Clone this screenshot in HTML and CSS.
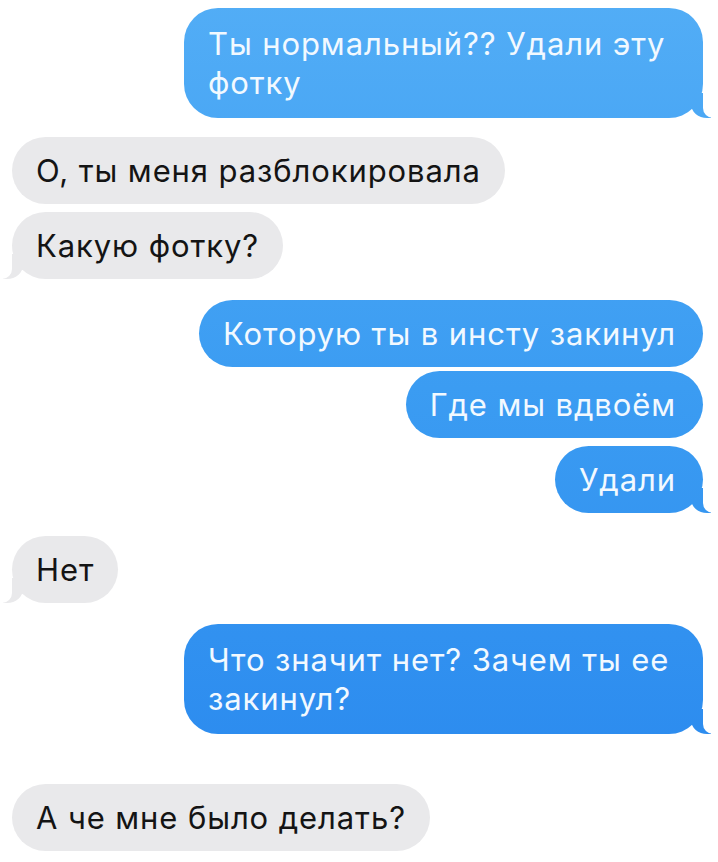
FILE: index.html
```html
<!DOCTYPE html>
<html lang="ru">
<head>
<meta charset="UTF-8">
<meta name="viewport" content="width=device-width, initial-scale=1.0">
<title>Сообщения</title>
<link rel="stylesheet" href="styles.css">
</head>
<body>

<div class="thread">
  <div class="msg sent tail long first">Ты нормальный?? Удали эту фотку</div>

  <div class="msg received gap-sm">О, ты меня разблокировала</div>
  <div class="msg received tail">Какую фотку?</div>

  <div class="msg sent gap">Которую ты в инсту закинул</div>
  <div class="msg sent tight">Где мы вдвоём</div>
  <div class="msg sent tail">Удали</div>

  <div class="msg received tail gap-md">Нет</div>

  <div class="msg sent tail long gap">Что значит нет? Зачем ты ее закинул?</div>

  <div class="msg received gap-lg">А че мне было делать?</div>
</div>

</body>
</html>
```

FILE: styles.css
```css
body {
  margin: 0;
  padding: 0;
  background-color: #fff;
  font-family: "Inter", "Liberation Sans", Arial, sans-serif;
}
.thread {
  display: flex;
  flex-direction: column;
  padding: 8px 15px 8px 12px;
}
.msg {
  position: relative;
  max-width: 468px;
  margin-top: 8px;
  padding: 14px 24px;
  font-size: 31px;
  line-height: 39px;
  letter-spacing: 0.9px;
  border-radius: 34px;
}
.msg.long {
  padding-top: 16px;
  padding-bottom: 16px;
}
.msg.first {
  margin-top: 0;
}
.msg.gap-sm {
  margin-top: 19px;
}
.msg.gap {
  margin-top: 21px;
}
.msg.gap-md {
  margin-top: 23px;
}
.msg.tight {
  margin-top: 4px;
}
.msg.gap-lg {
  margin-top: 50px;
}

/* outgoing: blue, gradient follows the screen like in iMessage */
.sent {
  align-self: flex-end;
  padding-right: 27px;
  color: #f2f9ff;
  background: linear-gradient(to bottom, #52adf6 0%, #3b9cf2 45%, #2887ee 100%) fixed;
}
.received {
  align-self: flex-start;
  color: #141414;
  background-color: #e9e9eb;
}

/* the little curled tail on the last bubble of a group */
.tail::before,
.tail::after {
  content: "";
  position: absolute;
  bottom: 0;
  height: 25px;
}
.sent.tail::before {
  right: -8px;
  width: 20px;
  background: inherit;
  border-bottom-left-radius: 16px 14px;
}
.sent.tail::after {
  right: -26px;
  width: 26px;
  background-color: #fff;
  border-bottom-left-radius: 10px;
}
.received.tail::before {
  left: -9px;
  width: 20px;
  background-color: #e9e9eb;
  border-bottom-right-radius: 16px 14px;
}
.received.tail::after {
  left: -26px;
  width: 26px;
  background-color: #fff;
  border-bottom-right-radius: 10px;
}
```
